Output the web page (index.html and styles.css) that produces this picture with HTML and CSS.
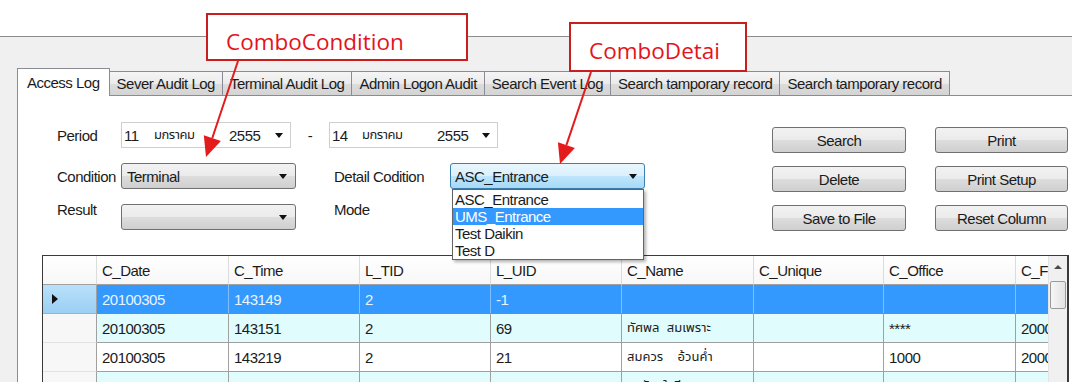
FILE: index.html
```html
<!DOCTYPE html>
<html lang="th">
<head>
    <meta charset="UTF-8">
    <meta name="viewport" content="width=device-width, initial-scale=1.0">
    <title>Access Log</title>
    <link rel="stylesheet" href="styles.css">
</head>
<body>

<div class="screen">
    <div class="window">
        <div class="tabs">
            <div class="tab active">Access Log</div>
            <div class="tab">Sever Audit Log</div>
            <div class="tab">Terminal Audit Log</div>
            <div class="tab">Admin Logon Audit</div>
            <div class="tab">Search Event Log</div>
            <div class="tab">Search tamporary record</div>
            <div class="tab">Search tamporary record</div>
        </div>

        <div class="panel">
            <div class="form">
                <div class="filters">
                    <div class="frow">
                        <label class="lbl">Period</label>
                        <div class="date">
                            <span class="d-day">11</span>
                            <span class="d-month">มกราคม</span>
                            <span class="d-year">2555</span>
                            <i class="caret"></i>
                        </div>
                        <span class="dash">-</span>
                        <div class="date date-to">
                            <span class="d-day">14</span>
                            <span class="d-month">มกราคม</span>
                            <span class="d-year">2555</span>
                            <i class="caret"></i>
                        </div>
                    </div>
                    <div class="frow">
                        <label class="lbl">Condition</label>
                        <div class="combo"><span>Terminal</span><i class="caret"></i></div>
                        <label class="lbl lbl-detail">Detail Codition</label>
                        <div class="combo combo-hot">
                            <span>ASC_Entrance</span><i class="caret"></i>
                            <ul class="droplist">
                                <li>ASC_Entrance</li>
                                <li class="picked">UMS_Entrance</li>
                                <li>Test Daikin</li>
                                <li>Test D</li>
                            </ul>
                        </div>
                    </div>
                    <div class="frow frow-top">
                        <label class="lbl">Result</label>
                        <div class="combo"><span></span><i class="caret"></i></div>
                        <label class="lbl lbl-detail">Mode</label>
                    </div>
                </div>

                <div class="buttons">
                    <button>Search</button>
                    <button>Print</button>
                    <button>Delete</button>
                    <button>Print Setup</button>
                    <button>Save to File</button>
                    <button>Reset Column</button>
                </div>
            </div>

            <div class="gridbox">
                <div class="gridview">
                    <div class="grow ghead">
                        <div class="cell"></div>
                        <div class="cell">C_Date</div>
                        <div class="cell">C_Time</div>
                        <div class="cell">L_TID</div>
                        <div class="cell">L_UID</div>
                        <div class="cell">C_Name</div>
                        <div class="cell">C_Unique</div>
                        <div class="cell">C_Office</div>
                        <div class="cell">C_FirstDate</div>
                    </div>
                    <div class="grow selected">
                        <div class="cell rh"><i class="pointer"></i></div>
                        <div class="cell">20100305</div>
                        <div class="cell">143149</div>
                        <div class="cell">2</div>
                        <div class="cell">-1</div>
                        <div class="cell"></div>
                        <div class="cell"></div>
                        <div class="cell"></div>
                        <div class="cell"></div>
                    </div>
                    <div class="grow alt">
                        <div class="cell rh"></div>
                        <div class="cell">20100305</div>
                        <div class="cell">143151</div>
                        <div class="cell">2</div>
                        <div class="cell">69</div>
                        <div class="cell thai">ทัศพล  สมเพราะ</div>
                        <div class="cell"></div>
                        <div class="cell">****</div>
                        <div class="cell">20000101</div>
                    </div>
                    <div class="grow">
                        <div class="cell rh"></div>
                        <div class="cell">20100305</div>
                        <div class="cell">143219</div>
                        <div class="cell">2</div>
                        <div class="cell">21</div>
                        <div class="cell thai">สมควร    อ้วนค่ำ</div>
                        <div class="cell"></div>
                        <div class="cell">1000</div>
                        <div class="cell">20000101</div>
                    </div>
                    <div class="grow alt">
                        <div class="cell rh"></div>
                        <div class="cell">20100304</div>
                        <div class="cell">090755</div>
                        <div class="cell">1</div>
                        <div class="cell">20</div>
                        <div class="cell thai">สุรชัย  ใจดี</div>
                        <div class="cell"></div>
                        <div class="cell">1000</div>
                        <div class="cell">20010101</div>
                    </div>
                </div>
                <div class="vscroll">
                    <div class="sb-up"><i></i></div>
                    <div class="sb-thumb"></div>
                </div>
            </div>
        </div>
    </div>

    <!-- callouts drawn over the screenshot -->
    <div class="callout callout-cond">ComboCondition</div>
    <div class="callout callout-detail">ComboDetai</div>
    <svg class="arrows" width="1072" height="390" viewBox="0 0 1072 390">
        <line x1="238" y1="61" x2="212.3" y2="138" stroke="#e41b1b" stroke-width="2"/>
        <polygon points="206,157 220.9,140.9 203.8,135.2" fill="#e41b1b"/>
        <line x1="591" y1="72" x2="566.4" y2="145.1" stroke="#e41b1b" stroke-width="2"/>
        <polygon points="560,164 574.9,147.9 557.9,142.2" fill="#e41b1b"/>
    </svg>
</div>

</body>
</html>
```

FILE: styles.css
```css
* {
    box-sizing: border-box;
}
body {
    margin: 0;
    background: #fff;
    font-family: "Liberation Sans", Arial, "Noto Sans Thai", "Tahoma", sans-serif;
    font-size: 15px;
    letter-spacing: -0.5px;
    color: #1b1b1b;
}
.screen {
    position: relative;
    width: 1072px;
    height: 390px;
    padding-top: 36px;
    overflow: hidden;
}
.window {
    height: 346px;
    border-top: 1px solid #8c8c8c;
    background: #f0f0f0;
    padding: 31px 0 0 17px;
    overflow: hidden;
    display: flex;
    flex-direction: column;
}

/* tab strip */
.tabs {
    display: flex;
    align-items: flex-end;
    height: 27px;
    flex: none;
    position: relative;
    z-index: 1;
}
.tab {
    height: 24px;
    padding: 0 7px;
    margin-left: -1px;
    border: 1px solid #898c95;
    border-bottom: none;
    background: linear-gradient(#f5f5f5, #ebebeb 50%, #dcdcdc 51%, #d4d4d4);
    display: flex;
    align-items: center;
    white-space: nowrap;
}
.tab.active {
    height: 28px;
    margin-left: 0;
    margin-bottom: -1px;
    padding: 0 9px;
    background: #fff;
}
.panel {
    flex: 1;
    background: #fff;
    border-top: 1px solid #898c95;
    border-left: 1px solid #898c95;
}

/* filter form */
.form {
    display: flex;
    padding: 26px 0 0 39px;
}
.filters {
    display: flex;
    flex-direction: column;
    gap: 15px;
}
.frow {
    display: flex;
    align-items: center;
    height: 26px;
}
.frow-top .lbl {
    align-self: flex-start;
    margin-top: -3px;
}
.lbl {
    width: 64px;
    white-space: nowrap;
}
.lbl-detail {
    width: 116px;
    margin-left: 38px;
}
.caret {
    width: 0;
    height: 0;
    border-left: 4px solid transparent;
    border-right: 4px solid transparent;
    border-top: 5px solid #111;
    margin-left: auto;
}
.date {
    width: 170px;
    height: 26px;
    border: 1px solid #cfcfcf;
    background: #fff;
    display: flex;
    align-items: center;
    padding: 0 7px 0 2px;
}
.date-to {
    width: 169px;
}
.d-day {
    width: 30px;
}
.d-month {
    width: 75px;
    font-size: 13px;
}
.dash {
    width: 38px;
    text-align: center;
}
.combo {
    position: relative;
    width: 175px;
    height: 26px;
    border: 1px solid #707070;
    border-radius: 3px;
    background: linear-gradient(#f2f2f2, #ebebeb 50%, #dddddd 51%, #cfcfcf);
    display: flex;
    align-items: center;
    padding: 0 8px 0 5px;
}
.combo-hot {
    width: 195px;
    padding: 0 7px 0 4px;
    border-color: #3c7fb1;
    background: linear-gradient(#eaf6fd, #d9f0fc 50%, #bee6fd 51%, #a7d9f5);
}
.droplist {
    position: absolute;
    top: 25px;
    left: 1px;
    width: 192px;
    margin: 0;
    padding: 1px 0 0;
    list-style: none;
    background: #fff;
    border: 1px solid #646464;
    box-shadow: 2px 2px 3px rgba(0, 0, 0, 0.3);
    z-index: 5;
}
.droplist li {
    height: 17px;
    line-height: 17px;
    padding-left: 2px;
}
.droplist li.picked {
    background: #3399ff;
    color: #fff;
}

/* buttons */
.buttons {
    display: grid;
    grid-template-columns: 134px 133px;
    grid-auto-rows: 26px;
    column-gap: 29px;
    row-gap: 13px;
    margin: 5px 0 0 127px;
}
.buttons button {
    font: inherit;
    letter-spacing: inherit;
    color: inherit;
    padding: 0;
    border: 1px solid #707070;
    border-radius: 3px;
    background: linear-gradient(#f2f2f2, #ebebeb 50%, #dddddd 51%, #cfcfcf);
}

/* data grid */
.gridbox {
    display: flex;
    width: 1027px;
    height: 140px;
    margin: 24px 0 0 24px;
    border: 1px solid #3a3a3a;
    border-bottom: none;
}
.gridview {
    flex: 1;
    overflow: hidden;
}
.grow {
    display: grid;
    grid-template-columns: 54px 132px 131px 131px 131px 132px 130px 132px 100px;
    height: 29px;
}
.cell {
    display: flex;
    align-items: center;
    padding-left: 5px;
    border-right: 1px solid #a0a0a0;
    border-bottom: 1px solid #a0a0a0;
    white-space: pre;
    overflow: hidden;
}
.ghead .cell {
    background: linear-gradient(#ffffff, #f7f7f7);
    border-right-color: #dcdcdc;
    border-bottom-color: #a0a0a0;
}
.grow.alt .cell {
    background: #e0fcfc;
}
.grow.selected .cell {
    background: #3399ff;
    color: #e9f4ff;
    border-bottom-color: #3399ff;
    border-right-color: #7fbfff;
}
.grow .cell.rh {
    background: #f7f7f7;
    border-bottom-color: #e2e2e2;
}
.grow.selected .cell.rh {
    background: linear-gradient(#b9e1fb, #9bcff3);
    border-bottom-color: #8bb8d8;
    border-right-color: #a0a0a0;
    padding-left: 9px;
}
.thai {
    font-size: 13px;
    letter-spacing: 0;
}
.pointer {
    width: 0;
    height: 0;
    border-top: 5px solid transparent;
    border-bottom: 5px solid transparent;
    border-left: 6px solid #111;
}
.vscroll {
    width: 20px;
    background: #f0f0f0;
    border-left: 1px solid #e4e4e4;
    border-right: 1px solid #3a3a3a;
    flex: none;
}
.sb-up {
    height: 22px;
    display: flex;
    align-items: center;
    justify-content: center;
}
.sb-up i {
    width: 0;
    height: 0;
    border-left: 4px solid transparent;
    border-right: 4px solid transparent;
    border-bottom: 4px solid #4a4a4a;
}
.sb-thumb {
    height: 28px;
    margin: 3px 1px 0 1px;
    border: 1px solid #9a9a9a;
    border-radius: 2px;
    background: linear-gradient(90deg, #f6f6f6, #e3e3e3);
}

/* red callouts */
.callout {
    position: absolute;
    display: flex;
    align-items: center;
    padding-left: 18px;
    border: 2px solid #c81e1e;
    background: #fff;
    color: #e3141b;
    font-family: "Open Sans", "Liberation Sans", sans-serif;
    font-size: 22.5px;
    letter-spacing: 0;
    z-index: 10;
}
.callout-cond {
    left: 206px;
    top: 13px;
    width: 262px;
    height: 48px;
    padding-top: 8px;
}
.callout-detail {
    left: 569px;
    top: 22px;
    width: 178px;
    height: 50px;
    padding-top: 6px;
}
.arrows {
    position: absolute;
    left: 0;
    top: 0;
    z-index: 11;
    pointer-events: none;
}
```
